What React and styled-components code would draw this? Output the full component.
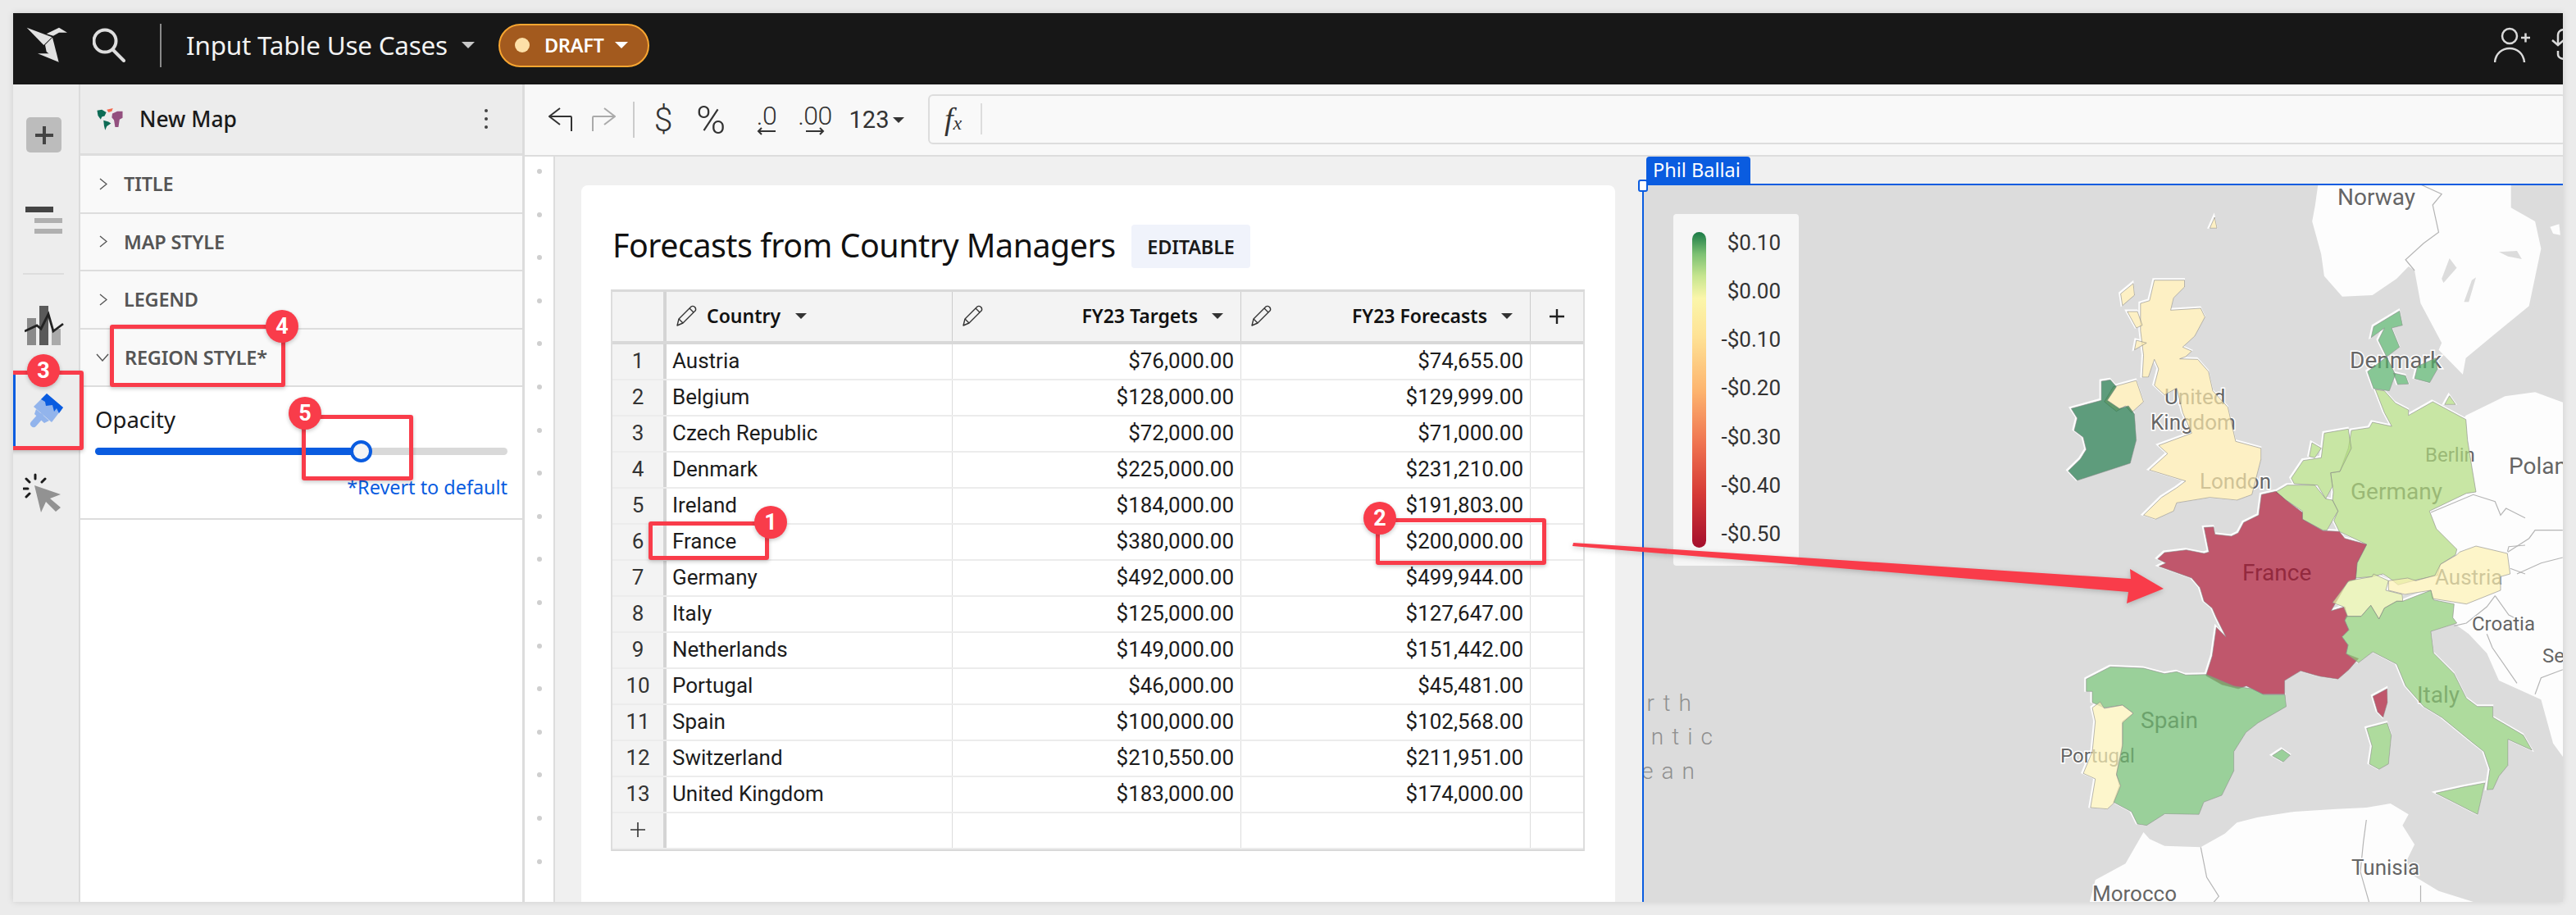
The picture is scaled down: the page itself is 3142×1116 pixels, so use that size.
import React from "react";
import styled, { createGlobalStyle } from "styled-components";

const UI_FONT = `"Noto Sans", "Liberation Sans", sans-serif`;
const DATA_FONT = `Roboto, "Liberation Sans", sans-serif`;
const BLUE = "#0a5ce0";
const RED = "#f93c4a";

const GlobalStyle = createGlobalStyle`
  html, body {
    margin: 0;
    padding: 0;
    background: #ebebeb;
    overflow: hidden;
  }
  * {
    box-sizing: border-box;
  }
`;

const Window = styled.div`
  position: relative;
  width: 3110px;
  height: 1084px;
  margin: 16px;
  overflow: hidden;
  display: flex;
  flex-direction: column;
  background: #fff;
  box-shadow: 0 0 8px rgba(0, 0, 0, 0.12);
  font-family: ${UI_FONT};
`;

/* top bar */
const Header = styled.header`
  height: 87px;
  flex-shrink: 0;
  display: flex;
  align-items: center;
  padding-left: 16px;
  padding-bottom: 9px;
  background: #171717;
`;

const SearchIcon = styled.svg`
  margin-left: 31px;
`;

const HeaderRule = styled.div`
  width: 2px;
  height: 53px;
  margin-left: 42px;
  background: #8a8a8a;
`;

const DocTitle = styled.div`
  margin-left: 30px;
  margin-top: -2px;
  font-size: 31.4px;
  letter-spacing: -0.2px;
  color: #f2f2f2;
  white-space: nowrap;
`;

const Caret = styled.span`
  display: inline-block;
  flex-shrink: 0;
  margin-left: ${(p) => p.$ml || 0}px;
  border-left: ${(p) => p.$size || 7}px solid transparent;
  border-right: ${(p) => p.$size || 7}px solid transparent;
  border-top: ${(p) => (p.$size || 7) * 1.05}px solid ${(p) => p.$color || "#333"};
`;

const DraftPill = styled.div`
  display: flex;
  align-items: center;
  width: 184px;
  height: 53px;
  margin-left: 29px;
  padding-left: 18px;
  border: 2px solid #f8a631;
  border-radius: 27px;
  background: #a35a1e;
  color: #fff;
  font-size: 23.5px;
  font-weight: 600;
  letter-spacing: -0.3px;
`;

const DraftDot = styled.span`
  width: 18px;
  height: 18px;
  margin-right: 18px;
  border-radius: 50%;
  background: #fde0a8;
`;

const HeaderRight = styled.div`
  display: flex;
  align-items: center;
  gap: 20px;
  margin-left: auto;
  margin-right: -26px;
`;

/* left rail */
const Workspace = styled.div`
  flex: 1;
  display: flex;
  min-height: 0;
`;

const Rail = styled.nav`
  width: 82px;
  flex-shrink: 0;
  display: flex;
  flex-direction: column;
  align-items: flex-start;
  padding-top: 40px;
  background: #ededed;
  border-right: 2px solid #dcdcdc;
`;

const AddButton = styled.div`
  display: flex;
  align-items: center;
  justify-content: center;
  width: 43px;
  height: 43px;
  margin-left: 16px;
  border-radius: 5px;
  background: #bcbcbc;
`;

const RailIcon = styled.svg`
  display: block;
  margin-top: ${(p) => p.$mt}px;
  margin-left: ${(p) => p.$ml}px;
`;

const RailRule = styled.div`
  width: 50px;
  height: 2px;
  margin-top: 47px;
  margin-left: 12px;
  background: #dddddd;
`;

const ActiveTab = styled.div`
  width: 100%;
  height: 93px;
  margin-top: 33px;
  padding-top: 26px;
  padding-left: 17px;
  border-left: 3px solid ${BLUE};
`;

/* properties panel */
const Panel = styled.aside`
  width: 542px;
  flex-shrink: 0;
  display: flex;
  flex-direction: column;
  background: #fff;
  border-right: 3px solid #dcdcdc;
`;

const PanelHeader = styled.div`
  height: 87px;
  flex-shrink: 0;
  display: flex;
  align-items: center;
  padding-left: 20px;
  background: #ececec;
  border-bottom: 3px solid #dddddd;
`;

const PanelTitle = styled.div`
  margin-left: 20px;
  font-size: 26.4px;
  font-weight: 500;
  color: #1a1a1a;
`;

const MoreDots = styled.div`
  display: flex;
  flex-direction: column;
  gap: 6px;
  margin-left: auto;
  margin-right: 42px;
`;

const MoreDot = styled.span`
  width: 4px;
  height: 4px;
  border-radius: 50%;
  background: #444;
`;

const SectionHead = styled.div`
  height: 70.5px;
  flex-shrink: 0;
  display: flex;
  align-items: center;
  padding-left: ${(p) => (p.$open ? 19 : 23)}px;
  background: #f9f9f9;
  border-bottom: 2.5px solid #dddddd;
`;

const SectionLabel = styled.div`
  margin-left: ${(p) => (p.$open ? 19 : 20)}px;
  font-size: 23.5px;
  font-weight: 600;
  color: #555;
  letter-spacing: -0.2px;
`;

const OpacitySection = styled.div`
  height: 162px;
  flex-shrink: 0;
  display: flex;
  flex-direction: column;
  padding: 22px 18px 0 18px;
  border-bottom: 2.5px solid #dddddd;
`;

const OpacityLabel = styled.div`
  font-size: 27.5px;
  line-height: 36px;
  color: #1a1a1a;
`;

const SliderTrack = styled.div`
  position: relative;
  width: 100%;
  height: 9px;
  margin-top: 16px;
  border-radius: 5px;
  background: #d9d9d9;
`;

const SliderFill = styled.div`
  height: 100%;
  border-radius: 5px;
  background: ${BLUE};
`;

const SliderThumb = styled.div`
  position: absolute;
  top: -9px;
  width: 27px;
  height: 27px;
  margin-left: -13px;
  border: 4px solid ${BLUE};
  border-radius: 50%;
  background: #f5f5f5;
`;

const RevertLink = styled.div`
  margin-top: 23px;
  text-align: right;
  font-size: 23.4px;
  line-height: 32px;
  color: ${BLUE};
`;

/* main area */
const Main = styled.main`
  flex: 1;
  min-width: 0;
  display: flex;
  flex-direction: column;
`;

const Toolbar = styled.div`
  height: 88px;
  flex-shrink: 0;
  display: flex;
  align-items: center;
  padding-left: 29px;
  background: #f8f8f8;
  border-bottom: 2.5px solid #dddddd;
  color: #333;
`;

const ToolIcon = styled.svg`
  flex-shrink: 0;
  margin-left: ${(p) => p.$ml || 0}px;
`;

const ToolRule = styled.div`
  width: 2px;
  height: 44px;
  flex-shrink: 0;
  margin-left: 21px;
  background: #cccccc;
`;

const ToolGlyph = styled.span`
  flex-shrink: 0;
  width: ${(p) => p.$w}px;
  margin-left: ${(p) => p.$ml}px;
  font-family: ${DATA_FONT};
  font-size: ${(p) => p.$size}px;
  font-weight: ${(p) => p.$weight || 300};
  line-height: 1;
  text-align: center;
`;

const DecimalStack = styled.div`
  flex-shrink: 0;
  display: flex;
  flex-direction: column;
  align-items: center;
  width: ${(p) => p.$w}px;
  margin-left: ${(p) => p.$ml}px;
  font-family: ${DATA_FONT};
  font-size: 32px;
  font-weight: 300;
  line-height: 28px;
  letter-spacing: -0.5px;
`;

const FormulaBox = styled.div`
  flex: 1;
  height: 61px;
  display: flex;
  align-items: center;
  margin-left: 29px;
  margin-right: -4px;
  margin-top: -2px;
  padding-left: 18px;
  background: #f9f9f9;
  border: 2px solid #dddddd;
  border-radius: 6px;
`;

const FxGlyph = styled.span`
  width: 44px;
  font-family: "Liberation Serif", serif;
  font-style: italic;
  font-size: 38px;
  line-height: 1;
  color: #333;
  small {
    font-size: 24px;
  }
`;

const FormulaRule = styled.div`
  width: 2px;
  height: 38px;
  background: #dddddd;
`;

const Canvas = styled.div`
  flex: 1;
  min-height: 0;
  display: flex;
`;

const Gutter = styled.div`
  width: 37px;
  flex-shrink: 0;
  display: flex;
  flex-direction: column;
  align-items: center;
  gap: 46.6px;
  padding-top: 15px;
  overflow: hidden;
  background: #fff;
  border-right: 2px solid #dddddd;
`;

const GutterDot = styled.span`
  width: 6px;
  height: 6px;
  flex-shrink: 0;
  border-radius: 50%;
  background: #cfcfcf;
`;

const Stage = styled.div`
  flex: 1;
  min-width: 0;
  display: flex;
  gap: 33px;
  padding: 35px 0 0 32px;
  background: #f0f0f0;
`;

const Card = styled.section`
  width: 1261px;
  flex-shrink: 0;
  padding: 48px 0 0 36px;
  background: #fff;
  border-radius: 8px 8px 0 0;
`;

const CardHead = styled.div`
  display: flex;
  align-items: center;
  height: 53px;
  margin-bottom: 26px;
  padding-left: 2px;
`;

const CardTitle = styled.h2`
  margin: -3px 0 0;
  font-size: 39.4px;
  font-weight: 400;
  letter-spacing: -0.5px;
  color: #111;
  white-space: nowrap;
`;

const EditableTag = styled.span`
  display: flex;
  align-items: center;
  justify-content: center;
  width: 145px;
  height: 53px;
  margin-left: auto;
  margin-right: 445px;
  border-radius: 4px;
  background: #f0f3fb;
  font-size: 23.5px;
  font-weight: 600;
  letter-spacing: -0.2px;
  color: #1a1a1a;
`;

/* table */
const Table = styled.div`
  width: 1188px;
  font-family: ${DATA_FONT};
  font-size: 26px;
  color: #1c1c1c;
  border-top: 3px solid #d9d9d9;
  border-left: 2px solid #dddddd;
  border-right: 2px solid #dddddd;
  border-bottom: 2px solid #d9d9d9;
`;

const Row = styled.div`
  display: grid;
  grid-template-columns: 66px 349px 352px 353px 64px;
  height: ${(p) => (p.$head ? 64 : 44)}px;
  border-bottom: ${(p) => (p.$head ? "4px solid #d8d8d8" : "2px solid #ececec")};
  background: ${(p) => (p.$head ? "#f3f3f3" : "#fff")};
`;

const IndexCell = styled.div`
  display: flex;
  align-items: center;
  justify-content: center;
  padding-bottom: 2px;
  background: #f3f3f3;
  border-right: 4px solid #d4d4d4;
  color: #333;
`;

const Cell = styled.div`
  display: flex;
  align-items: center;
  justify-content: ${(p) => (p.$right ? "flex-end" : "flex-start")};
  padding: ${(p) => (p.$right ? "0 8px 2px 0" : "0 0 2px 7px")};
  border-right: 1px solid #dcdcdc;
  white-space: nowrap;
`;

const HeadCell = styled.div`
  display: flex;
  align-items: center;
  padding: 0 21px 2px 12px;
  border-right: 1px solid #cccccc;
  font-family: ${UI_FONT};
  font-size: 23px;
  font-weight: 600;
  color: #111;
  white-space: nowrap;
`;

const HeadText = styled.span`
  margin-left: ${(p) => (p.$right ? "auto" : "12px")};
`;

const PlusCell = styled.div`
  display: flex;
  align-items: center;
  justify-content: center;
`;

/* map */
const MapFrame = styled.div`
  position: relative;
  flex: 1;
  min-width: 0;
  margin-top: -2px;
  border-top: 2px solid ${BLUE};
  border-left: 2px solid ${BLUE};
  background: #dcdcdc;
`;

const MapSvg = styled.svg`
  display: block;
  font-family: ${DATA_FONT};
`;

const OwnerTag = styled.div`
  position: absolute;
  left: 3px;
  top: -35px;
  width: 127px;
  height: 33px;
  padding-left: 8px;
  border-radius: 4px 4px 0 0;
  background: ${BLUE};
  color: #fff;
  font-size: 23.5px;
  line-height: 32px;
`;

const ResizeHandle = styled.div`
  position: absolute;
  left: -7px;
  top: -7px;
  width: 12px;
  height: 15px;
  border: 2px solid ${BLUE};
  border-radius: 3px;
  background: #fff;
`;

const Legend = styled.div`
  position: absolute;
  left: 36px;
  top: 35px;
  width: 153px;
  height: 429px;
  display: flex;
  justify-content: space-between;
  padding: 22px 22px 0 23px;
  border-radius: 4px;
  background: #f6f6f6;
`;

const LegendBar = styled.div`
  width: 17px;
  height: 385px;
  border-radius: 9px;
  background: linear-gradient(
    180deg,
    #1a7a46 0%,
    #7dc173 7%,
    #c6e58f 14%,
    #fbf6aa 21%,
    #fee295 33%,
    #fdb56f 50%,
    #ef7350 67%,
    #d63a36 83%,
    #a50f2d 100%
  );
`;

const LegendScale = styled.div`
  display: flex;
  flex-direction: column;
  justify-content: space-between;
  height: 381px;
  text-align: right;
  font-family: ${DATA_FONT};
  font-size: 26px;
  line-height: 26px;
  color: #333;
`;

/* annotations drawn over the screenshot */
const Callout = styled.div`
  position: absolute;
  left: ${(p) => p.$x - 16}px;
  top: ${(p) => p.$y - 16}px;
  width: ${(p) => p.$w}px;
  height: ${(p) => p.$h}px;
  border: 5px solid ${RED};
  border-radius: 3px;
  box-shadow: 0 2px 5px rgba(0, 0, 0, 0.22);
`;

const Badge = styled.div`
  position: absolute;
  left: ${(p) => p.$x - 16 - 20}px;
  top: ${(p) => p.$y - 16 - 20}px;
  width: 40px;
  height: 40px;
  display: flex;
  align-items: center;
  justify-content: center;
  border-radius: 50%;
  background: ${RED};
  box-shadow: 0 2px 5px rgba(0, 0, 0, 0.22);
  color: #fff;
  font-family: ${DATA_FONT};
  font-size: 27px;
  font-weight: 700;
`;

const ArrowOverlay = styled.svg`
  position: absolute;
  left: 0;
  top: 0;
  filter: drop-shadow(0 2px 3px rgba(0, 0, 0, 0.2));
`;

const rows = [
  ["Austria", "$76,000.00", "$74,655.00"],
  ["Belgium", "$128,000.00", "$129,999.00"],
  ["Czech Republic", "$72,000.00", "$71,000.00"],
  ["Denmark", "$225,000.00", "$231,210.00"],
  ["Ireland", "$184,000.00", "$191,803.00"],
  ["France", "$380,000.00", "$200,000.00"],
  ["Germany", "$492,000.00", "$499,944.00"],
  ["Italy", "$125,000.00", "$127,647.00"],
  ["Netherlands", "$149,000.00", "$151,442.00"],
  ["Portugal", "$46,000.00", "$45,481.00"],
  ["Spain", "$100,000.00", "$102,568.00"],
  ["Switzerland", "$210,550.00", "$211,951.00"],
  ["United Kingdom", "$183,000.00", "$174,000.00"],
];

const legendValues = ["$0.10", "$0.00", "-$0.10", "-$0.20", "-$0.30", "-$0.40", "-$0.50"];

const callouts = [
  { x: 4, y: 452, w: 98, h: 97 },
  { x: 134, y: 396, w: 214, h: 76 },
  { x: 368, y: 506, w: 136, h: 80 },
  { x: 791, y: 636, w: 147, h: 47 },
  { x: 1678, y: 632, w: 208, h: 57 },
];

const badges = [
  { n: 1, x: 940, y: 637 },
  { n: 2, x: 1683, y: 632 },
  { n: 3, x: 53, y: 452 },
  { n: 4, x: 344, y: 398 },
  { n: 5, x: 372, y: 504 },
];

// map shapes were traced at different crops, each helper brings them to page pixels
const north = (x, y) => [1990 + x * 0.7347, 170 + y / 3];
const south = (x, y) => [1990 + x * 0.7347, 640 + y / 3];
const fine = (x, y) => [2560 + x / 3, 560 + y / 3];

const pts = (to, list) =>
  list
    .trim()
    .split(/\s+/)
    .map((pair) => {
      const [x, y] = pair.split(",").map(Number);
      return to(x, y).map((v) => v.toFixed(1)).join(",");
    })
    .join(" ");

const SEA = "#dcdcdc";
const LAND = "#fdfdfd";
const BORDER = "#b5b5b5";

const landShapes = [
  pts(north, "1140,160 1135,240 1130,300 1145,420 1150,500 1180,575 1230,570 1270,510 1290,465 1300,480 1310,600 1345,745 1340,770 1380,860 1385,800 1440,700 1490,610 1510,400 1500,300 1460,250 1460,160"),
  pts(north, "1525,320 1540,310 1542,350 1530,345"),
  pts(north, "1385,1010 1450,940 1500,925 1550,965 1550,1420 1330,1420 1300,1300"),
  pts(south, "1330,0 1550,0 1550,860 1530,800 1510,640 1440,570 1420,470 1390,400 1365,360 1340,200"),
  pts(south, "850,1125 860,1150 885,1175 945,1180 985,1130 1005,1090 1040,1070 1100,1050 1170,1040 1220,1035 1260,1020 1290,1060 1280,1100 1300,1170 1280,1260 1340,1340 1405,1385 760,1385 770,1300 820,1240"),
];

const lakeShapes = [
  pts(north, "1345,510 1358,435 1370,470 1348,525"),
  pts(north, "1382,595 1395,515 1402,505 1390,595"),
  pts(north, "1490,685 1492,625 1508,595 1500,640"),
  pts(north, "1440,412 1470,408 1478,438 1455,428"),
];

const borderLines = [
  pts(north, "1310,165 1345,200 1330,240 1340,340 1315,380 1285,440 1300,480"),
  pts(fine, "1215,195 1370,130 1450,155 1470,205 1490,180 1560,215"),
  pts(fine, "1495,340 1500,320 1560,315"),
  pts(fine, "1505,400 1560,420"),
  pts(fine, "1450,500 1500,570 1560,600"),
  pts(fine, "1420,640 1440,690 1530,820"),
  pts(fine, "1300,610 1345,600 1420,540 1450,500"),
  pts(south, "1455,100 1490,50 1500,20 1546,20"),
  pts(south, "1470,180 1510,140 1546,120"),
  pts(south, "1500,620 1510,560 1546,530"),
  pts(south, "945,1180 955,1290 975,1360 965,1385"),
  pts(south, "1220,1080 1215,1160 1210,1270 1225,1385"),
  pts(south, "1310,1320 1310,1385"),
];

const regions = [
  // United Kingdom
  { fill: "#fce9ab", points: pts(north, "868,515 918,515 918,540 900,580 895,625 945,618 952,650 935,720 915,760 930,775 920,795 910,803 940,805 958,850 965,920 990,980 1003,1105 1045,1130 1045,1170 1030,1300 1005,1320 960,1310 905,1330 900,1360 870,1390 850,1375 880,1310 905,1275 920,1250 860,1210 890,1150 875,1120 930,1075 915,1000 905,910 885,935 868,900 875,840 868,805 858,870 848,870 850,790 845,700 845,600 860,590") },
  { fill: "#fce9ab", points: pts(north, "812,565 833,527 835,570 815,608") },
  { fill: "#fce9ab", points: pts(north, "823,630 840,630 848,680 838,690") },
  { fill: "#fce9ab", points: pts(north, "838,735 855,745 835,770") },
  { fill: "#fce9ab", points: pts(north, "968,285 972,325 960,325") },
  { fill: "#fce9ab", points: pts(north, "785,960 800,905 838,882 850,960 830,1000 820,975 805,995") },
  // Ireland
  { fill: "#1a7245", points: pts(north, "780,885 795,880 805,905 790,955 810,985 825,975 835,1005 838,1100 828,1185 740,1248 725,1213 745,1170 755,1135 750,1090 735,1065 740,1020 730,985 780,955") },
  // Denmark
  { fill: "#54af68", points: pts(north, "1275,628 1280,680 1262,690 1275,760 1245,810 1222,850 1232,912 1258,920 1268,860 1250,780 1240,735 1250,690 1228,725 1232,685") },
  { fill: "#54af68", points: pts(north, "1265,855 1285,865 1290,895 1272,897") },
  { fill: "#54af68", points: pts(north, "1305,830 1335,800 1338,840 1325,890 1300,875") },
  { fill: "#b0db7e", points: pts(north, "1358,938 1368,970 1350,970") },
  // Germany, Netherlands, Belgium
  { fill: "#b0db7e", points: pts(fine, "1012,-255 1045,-250 1085,-205 1133,-180 1133,-160 1222,-210 1343,-145 1349,-70 1365,30 1380,120 1345,125 1210,190 1235,255 1310,330 1305,350 1250,385 1240,425 1170,440 1095,460 1070,440 1040,420 1000,430 940,435 945,380 980,312 880,265 860,225 875,190 855,150 858,120 848,50 882,45 913,-40 924,-105 990,-115 1001,-135 1072,-120 1045,-170") },
  { fill: "#b0db7e", points: pts(fine, "704,70 748,5 814,-5 825,-95 913,-110 924,-40 882,45 848,50 855,100 830,145 800,95 715,90") },
  { fill: "#b0db7e", points: pts(fine, "770,-10 780,-60 814,-40 790,-5") },
  { fill: "#b0db7e", points: pts(fine, "648,120 690,95 790,95 830,145 855,150 875,190 860,215 835,260 820,260 745,220 745,190 685,150") },
  // France and Corsica
  { fill: "#a50f2d", points: pts(fine, "595,130 648,118 685,150 745,195 745,220 820,262 880,265 900,290 980,312 945,380 940,440 910,450 850,555 900,540 910,575 900,590 915,625 890,650 912,680 905,712 950,730 915,770 875,805 810,795 790,790 738,775 680,810 680,860 600,860 540,830 510,840 450,825 392,792 415,720 430,615 465,650 430,580 415,545 385,520 370,470 340,435 220,392 245,380 215,365 240,342 320,332 385,345 403,340 385,250 420,248 425,275 485,282 510,270 530,232 585,205") },
  { fill: "#a50f2d", points: pts(fine, "1003,868 1055,840 1056,890 1040,945 1020,925") },
  // Switzerland, Austria
  { fill: "#e4efa4", points: pts(fine, "855,525 915,445 1000,430 1005,420 1060,445 1050,480 1110,495 1112,520 1090,520 1045,545 1025,585 995,535 960,575 910,575 895,540") },
  { fill: "#fcf1b2", points: pts(fine, "1060,445 1130,435 1160,445 1230,425 1250,385 1310,350 1320,340 1380,318 1495,345 1505,420 1470,430 1470,480 1345,530 1220,510 1215,480 1120,495 1060,480") },
  // Italy and islands
  { fill: "#8bcc74", points: pts(fine, "905,575 960,575 995,535 1025,585 1045,545 1090,520 1112,520 1215,480 1225,515 1300,530 1295,580 1310,600 1215,630 1225,710 1300,785 1345,875 1385,905 1442,905 1442,945 1553,1010 1585,1065 1497,1025 1497,1120 1464,1160 1442,1208 1420,1210 1431,1135 1409,1070 1365,1035 1255,945 1189,905 1123,830 1090,750 1002,705 950,745 905,712 912,680 890,650 915,625 900,590") },
  { fill: "#8bcc74", points: pts(fine, "1233,1222 1332,1200 1412,1185 1386,1300") },
  { fill: "#8bcc74", points: pts(fine, "980,985 1055,965 1070,1010 1060,1115 1025,1135 990,1115 1000,1050") },
  // Spain, Mallorca, Portugal
  { fill: "#6fbc6f", points: pts(south, "795,520 850,525 885,545 905,538 920,550 955,548 1000,590 1030,600 1050,622 1085,622 1087,665 1040,725 1020,760 1000,830 1000,900 980,990 950,1015 942,1060 885,1058 855,1100 840,1095 830,1050 800,1015 810,955 805,910 815,800 815,720 833,690 815,660 785,670 765,650 765,610 755,610 755,565") },
  { fill: "#6fbc6f", points: pts(fine, "635,1085 670,1062 700,1083 675,1108") },
  { fill: "#fcf2b6", points: pts(south, "778,648 785,672 815,660 833,690 815,725 815,810 805,915 812,955 800,1020 790,1040 762,1035 770,930 750,910 765,830 770,720 765,670") },
];

const mapLabels = [
  { text: "Norway", x: 2851, y: 250, size: 28 },
  { text: "United", x: 2640, y: 493, size: 26 },
  { text: "Kingdom", x: 2623, y: 524, size: 26 },
  { text: "London", x: 2683, y: 596, size: 26 },
  { text: "Denmark", x: 2866, y: 449, size: 28 },
  { text: "Germany", x: 2867, y: 609, size: 28 },
  { text: "Berlin", x: 2958, y: 563, size: 24 },
  { text: "Poland", x: 3060, y: 578, size: 28 },
  { text: "France", x: 2735, y: 708, size: 28 },
  { text: "Austria", x: 2970, y: 713, size: 26 },
  { text: "Italy", x: 2948, y: 857, size: 28 },
  { text: "Spain", x: 2611, y: 888, size: 28 },
  { text: "Portugal", x: 2513, y: 930, size: 24 },
  { text: "Croatia", x: 3015, y: 769, size: 24 },
  { text: "Serbia", x: 3101, y: 808, size: 24 },
  { text: "Tunisia", x: 2868, y: 1067, size: 26 },
  { text: "Morocco", x: 2552, y: 1099, size: 26 },
];

const oceanLabels = [
  { text: "North", x: 2073, y: 867 },
  { text: "Atlantic", x: 2099, y: 908 },
  { text: "Ocean", x: 2077, y: 950 },
];

const Pencil = () => (
  <svg width="25" height="26" viewBox="0 0 25 26" fill="none" stroke="#333" strokeWidth="1.4" strokeLinejoin="round">
    <path d="M1 25 L3 17 L18 2 Q20 0.5 22.5 2.5 Q24.5 5 23 7 L8 22 Z" />
    <path d="M3 17 L8 22 M16 4 L21 9" />
  </svg>
);

const Chevron = ({ open }) =>
  open ? (
    <svg width="16" height="10" viewBox="0 0 16 10" fill="none" stroke="#555" strokeWidth="1.4">
      <polyline points="1,1 8,9 15,1" />
    </svg>
  ) : (
    <svg width="10" height="15" viewBox="0 0 10 15" fill="none" stroke="#555" strokeWidth="1.4">
      <polyline points="1,1 9,7.5 1,14" />
    </svg>
  );

const Logo = () => (
  <svg width="50" height="44" viewBox="96 100 150 132">
    <polygon points="98,102 190,137 160,166" fill="#e2e2e2" />
    <polygon points="165,165 192,138 215,228 170,190" fill="#e2e2e2" />
    <polygon points="138,197 190,197 215,228" fill="#e2e2e2" />
    <polygon points="170,125 216,102 246,120 216,120 195,132" fill="#e2e2e2" />
  </svg>
);

const WorldIcon = () => (
  <svg width="32" height="27" viewBox="354 397 94 80">
    <polygon points="355,405 372,402 388,412 382,425 372,428 368,438 358,424" fill="#0d6b55" />
    <polygon points="378,441 396,446 405,452 390,462 384,476 380,460" fill="#0d6b55" />
    <polygon points="390,402 412,397 408,408 396,412" fill="#f4694f" />
    <polygon points="410,416 428,408 447,408 447,432 436,438 432,465 420,465 416,440 408,430" fill="#93507f" />
  </svg>
);

const App = () => (
  <>
    <GlobalStyle />
    <Window>
      <Header>
        <Logo />
        <SearchIcon width="40" height="42" viewBox="0 0 40 42" fill="none" stroke="#dedede" strokeWidth="4" strokeLinecap="round">
          <circle cx="15" cy="16" r="13.5" />
          <line x1="25" y1="27" x2="38" y2="40" />
        </SearchIcon>
        <HeaderRule />
        <DocTitle>Input Table Use Cases</DocTitle>
        <Caret $ml={17} $size={8} $color="#c8c8c8" />
        <DraftPill>
          <DraftDot />
          DRAFT
          <Caret $ml={13} $size={8} $color="#fff" />
        </DraftPill>
        <HeaderRight>
          <svg width="50" height="44" viewBox="0 0 50 44" fill="none" stroke="#dadada" strokeWidth="2.5">
            <circle cx="19" cy="11" r="9" />
            <path d="M1 43 C2 32 10 26 19 26 C28 26 36 32 37 43" />
            <path d="M33 13 H44 M38.500 7.500 V18.500" />
          </svg>
          <svg width="40" height="40" viewBox="0 0 40 40" fill="none" stroke="#dadada" strokeWidth="2.5">
            <path d="M1 14 L8 20 L15 14 M8 20 V8 C8 3 12 1 16 1" />
            <path d="M8 27 V31 C8 35 12 37 17 37" />
          </svg>
        </HeaderRight>
      </Header>

      <Workspace>
        <Rail>
          <AddButton>
            <svg width="24" height="24" viewBox="0 0 24 24" stroke="#444" strokeWidth="4">
              <path d="M12 1 V23 M1 12 H23" />
            </svg>
          </AddButton>
          <RailIcon $mt={66} $ml={15} width="46" height="34" viewBox="0 0 46 34">
            <rect x="0" y="0" width="34" height="7" fill="#444" />
            <rect x="11" y="14" width="34" height="6" fill="#b0b0b0" />
            <rect x="11" y="27" width="34" height="6" fill="#b0b0b0" />
          </RailIcon>
          <RailRule />
          <RailIcon $mt={38} $ml={14} width="48" height="48" viewBox="0 0 48 48">
            <rect x="3" y="15" width="11" height="33" fill="#8a8a8a" />
            <rect x="18" y="0" width="11" height="48" fill="#5a5a5a" />
            <rect x="33" y="28" width="11" height="20" fill="#aaaaaa" />
            <polyline points="0,31 15,24 20,28 29,10 35,31 47,22" fill="none" stroke="#222" strokeWidth="2.8" />
          </RailIcon>
          <ActiveTab>
            <svg width="44" height="44" viewBox="0 0 44 44">
              <polygon points="21,0 41,17 27,35 5,16" fill="#92b4ec" />
              <polygon points="21,0 41,17 36,24 33,18 30,22 28,14 20,15 19,10 14,7" fill={BLUE} />
              <path d="M13 28 L5 37" stroke="#92b4ec" strokeWidth="8" strokeLinecap="round" />
              <polygon points="8,19 24,33 18,36 6,25" fill="#92b4ec" />
            </svg>
          </ActiveTab>
          <RailIcon $mt={30} $ml={12} width="48" height="48" viewBox="0 0 48 48">
            <polygon points="14,15 46,26 33,31 46,42 40,47 28,35 22,48" fill="#929292" />
            <path d="M15 2 V7 M4 7 L8 11 M27 7 L23 11 M1 19 H6 M4 29 L8 25" stroke="#1c1c1c" strokeWidth="3" strokeLinecap="round" />
          </RailIcon>
        </Rail>

        <Panel>
          <PanelHeader>
            <WorldIcon />
            <PanelTitle>New Map</PanelTitle>
            <MoreDots>
              <MoreDot />
              <MoreDot />
              <MoreDot />
            </MoreDots>
          </PanelHeader>
          {["TITLE", "MAP STYLE", "LEGEND"].map((label) => (
            <SectionHead key={label}>
              <Chevron />
              <SectionLabel>{label}</SectionLabel>
            </SectionHead>
          ))}
          <SectionHead $open>
            <Chevron open />
            <SectionLabel $open>REGION STYLE*</SectionLabel>
          </SectionHead>
          <OpacitySection>
            <OpacityLabel>Opacity</OpacityLabel>
            <SliderTrack>
              <SliderFill style={{ width: "64.4%" }} />
              <SliderThumb style={{ left: "64.4%" }} />
            </SliderTrack>
            <RevertLink>*Revert to default</RevertLink>
          </OpacitySection>
        </Panel>

        <Main>
          <Toolbar>
            <ToolIcon width="29" height="30" viewBox="0 0 29 30" fill="none" stroke="#333" strokeWidth="2">
              <path d="M14 1 L1 11 L14 21 M1 11 H27 C28 11 28 12 28 13 V29" />
            </ToolIcon>
            <ToolIcon $ml={24} width="29" height="30" viewBox="0 0 29 30" fill="none" stroke="#aaa" strokeWidth="2">
              <path d="M15 1 L28 11 L15 21 M28 11 H2 C1 11 1 12 1 13 V29" />
            </ToolIcon>
            <ToolRule />
            <ToolGlyph $w={26} $ml={22} $size={41}>$</ToolGlyph>
            <ToolGlyph $w={38} $ml={26} $size={49}>%</ToolGlyph>
            <DecimalStack $w={36} $ml={31}>
              .0
              <svg width="24" height="10" viewBox="0 0 24 10" fill="none" stroke="#333" strokeWidth="2">
                <path d="M23 5 H2 M6 1 L2 5 L6 9" />
              </svg>
            </DecimalStack>
            <DecimalStack $w={42} $ml={20}>
              .00
              <svg width="24" height="10" viewBox="0 0 24 10" fill="none" stroke="#333" strokeWidth="2">
                <path d="M1 5 H22 M18 1 L22 5 L18 9" />
              </svg>
            </DecimalStack>
            <ToolGlyph $w={50} $ml={20} $size={29} $weight={400}>123</ToolGlyph>
            <Caret $ml={4} $size={7.5} />
            <FormulaBox>
              <FxGlyph>
                f<small>x</small>
              </FxGlyph>
              <FormulaRule />
            </FormulaBox>
          </Toolbar>

          <Canvas>
            <Gutter>
              {Array.from({ length: 18 }, (_, i) => (
                <GutterDot key={i} />
              ))}
            </Gutter>
            <Stage>
              <Card>
                <CardHead>
                  <CardTitle>Forecasts from Country Managers</CardTitle>
                  <EditableTag>EDITABLE</EditableTag>
                </CardHead>
                <Table>
                  <Row $head>
                    <IndexCell />
                    <HeadCell>
                      <Pencil />
                      <HeadText>Country</HeadText>
                      <Caret $ml={18} $size={7} />
                    </HeadCell>
                    <HeadCell>
                      <Pencil />
                      <HeadText $right>FY23 Targets</HeadText>
                      <Caret $ml={17} $size={7} />
                    </HeadCell>
                    <HeadCell>
                      <Pencil />
                      <HeadText $right>FY23 Forecasts</HeadText>
                      <Caret $ml={17} $size={7} />
                    </HeadCell>
                    <PlusCell>
                      <svg width="18" height="18" viewBox="0 0 18 18" stroke="#222" strokeWidth="2.4">
                        <path d="M9 0 V18 M0 9 H18" />
                      </svg>
                    </PlusCell>
                  </Row>
                  {rows.map(([country, target, forecast], i) => (
                    <Row key={country}>
                      <IndexCell>{i + 1}</IndexCell>
                      <Cell>{country}</Cell>
                      <Cell $right>{target}</Cell>
                      <Cell $right>{forecast}</Cell>
                      <PlusCell />
                    </Row>
                  ))}
                  <Row>
                    <IndexCell>
                      <svg width="18" height="18" viewBox="0 0 18 18" stroke="#333" strokeWidth="1.6">
                        <path d="M9 0 V18 M0 9 H18" />
                      </svg>
                    </IndexCell>
                    <Cell />
                    <Cell />
                    <Cell />
                    <PlusCell />
                  </Row>
                </Table>
              </Card>

              <MapFrame>
                <MapSvg width="1121" height="874" viewBox="2005 226 1121 874">
                  <rect x="2005" y="226" width="1121" height="874" fill={SEA} />
                  {landShapes.map((points) => (
                    <polygon key={points} points={points} fill={LAND} />
                  ))}
                  {lakeShapes.map((points) => (
                    <polygon key={points} points={points} fill={SEA} />
                  ))}
                  {borderLines.map((points) => (
                    <polyline key={points} points={points} fill="none" stroke={BORDER} strokeWidth="1.2" />
                  ))}
                  {regions.map(({ points }) => (
                    <polygon key={points} points={points} fill={LAND} stroke={LAND} strokeWidth="3" transform="translate(-1 -1)" />
                  ))}
                  {mapLabels.map(({ text, x, y, size }) => (
                    <text key={text} x={x} y={y} fontSize={size} fill="#666" stroke="#fff" strokeWidth="3" paintOrder="stroke">
                      {text}
                    </text>
                  ))}
                  {oceanLabels.map(({ text, x, y }) => (
                    <text key={text} x={x} y={y} fontSize="28" fontWeight="300" fill="#8f8f8f" letterSpacing="10" textAnchor="end">
                      {text}
                    </text>
                  ))}
                  {regions.map(({ points, fill }) => (
                    <polygon key={points} points={points} fill={fill} fillOpacity="0.7" stroke="#888" strokeWidth="0.6" />
                  ))}
                </MapSvg>
                <OwnerTag>Phil Ballai</OwnerTag>
                <ResizeHandle />
                <Legend>
                  <LegendBar />
                  <LegendScale>
                    {legendValues.map((value) => (
                      <span key={value}>{value}</span>
                    ))}
                  </LegendScale>
                </Legend>
              </MapFrame>
            </Stage>
          </Canvas>
        </Main>
      </Workspace>

      <ArrowOverlay width="3110" height="1084" viewBox="16 16 3110 1084">
        <polygon points="1919,662 2599,706 2598,694 2639,718 2594,736 2596,722 1918,666" fill={RED} />
      </ArrowOverlay>
      {callouts.map((box) => (
        <Callout key={box.x} $x={box.x} $y={box.y} $w={box.w} $h={box.h} />
      ))}
      {badges.map(({ n, x, y }) => (
        <Badge key={n} $x={x} $y={y}>
          {n}
        </Badge>
      ))}
    </Window>
  </>
);

export default App;
